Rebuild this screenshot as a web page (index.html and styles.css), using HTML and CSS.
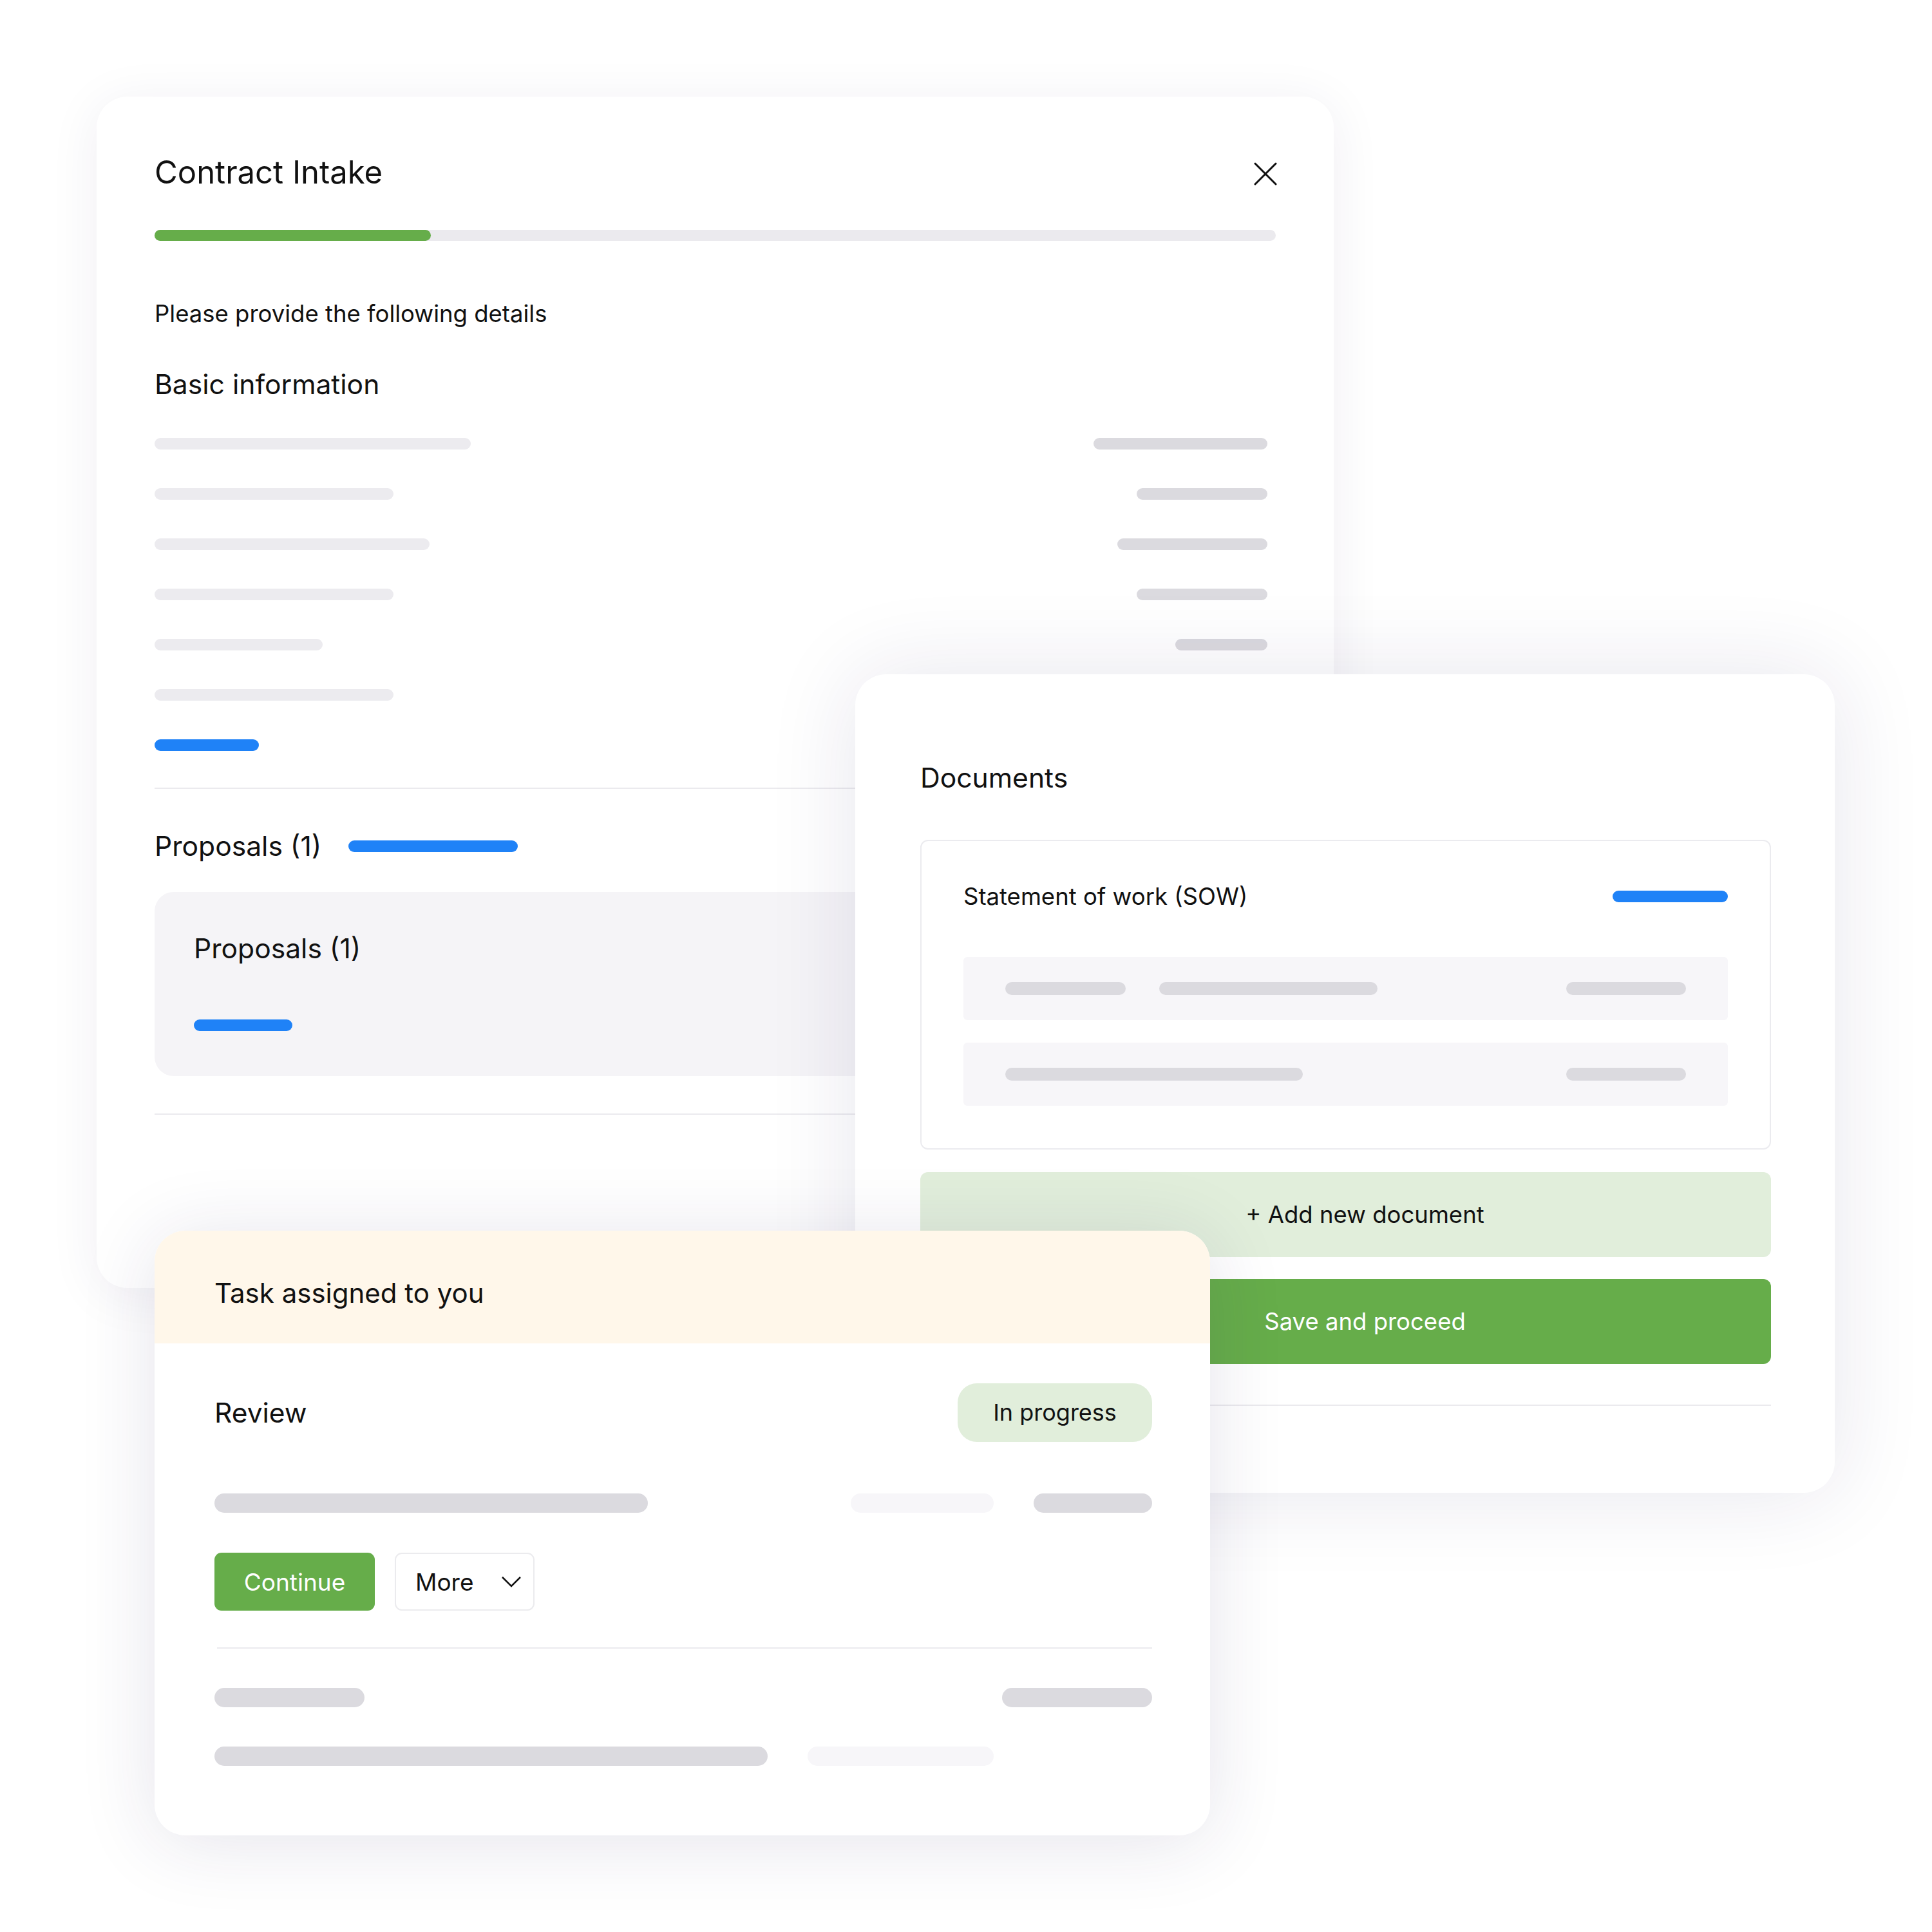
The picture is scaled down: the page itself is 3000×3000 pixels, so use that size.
FILE: index.html
```html
<!DOCTYPE html>
<html>

<head>
    <title>Contract Intake</title>
    <meta name="viewport" content="width=device-width, initial-scale=1">
    <link rel="stylesheet" href="styles.css">
</head>
<body>
    <div class="canvas">

        <!-- intake form window -->
        <div class="card intake-card">
            <div class="title-row">
                <h1 class="title">Contract Intake</h1>
                <svg class="close-icon" width="36" height="36" viewBox="0 0 36 36">
                    <path d="M2 2 L34 34 M34 2 L2 34" stroke="#111" stroke-width="3" stroke-linecap="round" fill="none"/>
                </svg>
            </div>
            <div class="progress">
                <div class="progress-fill"></div>
            </div>
            <p class="intro">Please provide the following details</p>
            <h2 class="section-title">Basic information</h2>
            <div class="info-rows">
                <div class="info-row"><span class="bar bar-light" style="width: 491px"></span><span class="bar bar-dark" style="width: 270px"></span></div>
                <div class="info-row"><span class="bar bar-light" style="width: 371px"></span><span class="bar bar-dark" style="width: 203px"></span></div>
                <div class="info-row"><span class="bar bar-light" style="width: 427px"></span><span class="bar bar-dark" style="width: 233px"></span></div>
                <div class="info-row"><span class="bar bar-light" style="width: 371px"></span><span class="bar bar-dark" style="width: 203px"></span></div>
                <div class="info-row"><span class="bar bar-light" style="width: 261px"></span><span class="bar bar-dark" style="width: 143px"></span></div>
                <div class="info-row"><span class="bar bar-light" style="width: 371px"></span><span class="bar bar-dark" style="width: 203px"></span></div>
                <div class="info-row"><span class="bar bar-blue" style="width: 162px"></span></div>
            </div>
            <hr class="divider">
            <div class="proposals-head">
                <h2 class="section-title">Proposals (1)</h2>
                <span class="bar bar-blue" style="width: 263px"></span>
            </div>
            <div class="proposal-box">
                <h2 class="section-title">Proposals (1)</h2>
                <span class="bar bar-blue" style="width: 153px"></span>
            </div>
            <hr class="divider divider-low">
        </div>

        <!-- documents window -->
        <div class="card docs-card">
            <h2 class="section-title">Documents</h2>
            <div class="doc-box">
                <div class="doc-head">
                    <span class="doc-name">Statement of work (SOW)</span>
                    <span class="bar bar-blue" style="width: 179px"></span>
                </div>
                <div class="doc-row">
                    <span class="bar bar-dark" style="width: 187px"></span>
                    <span class="bar bar-dark gap-left" style="width: 339px"></span>
                    <span class="bar bar-dark push-right" style="width: 186px"></span>
                </div>
                <div class="doc-row">
                    <span class="bar bar-dark" style="width: 462px"></span>
                    <span class="bar bar-dark push-right" style="width: 186px"></span>
                </div>
            </div>
            <button class="wide-button add-button">+ Add new document</button>
            <button class="wide-button save-button">Save and proceed</button>
            <hr class="divider docs-divider">
        </div>

        <!-- task window -->
        <div class="card task-card">
            <div class="task-head">Task assigned to you</div>
            <div class="task-body">
                <div class="review-row">
                    <span class="review-title">Review</span>
                    <span class="status-pill">In progress</span>
                </div>
                <div class="task-row first-row">
                    <span class="bar bar-dark tall" style="width: 673px"></span>
                    <span class="bar bar-faint tall push-right" style="width: 222px"></span>
                    <span class="bar bar-dark tall gap-wide" style="width: 184px"></span>
                </div>
                <div class="actions">
                    <button class="continue-button">Continue</button>
                    <button class="more-button">More
                        <svg width="32" height="18" viewBox="0 0 32 18">
                            <path d="M2 2 L16 16 L30 2" stroke="#111" stroke-width="2.5" fill="none"/>
                        </svg>
                    </button>
                </div>
                <hr class="divider task-divider">
                <div class="task-row">
                    <span class="bar bar-dark tall" style="width: 233px"></span>
                    <span class="bar bar-dark tall push-right" style="width: 233px"></span>
                </div>
                <div class="task-row last-row">
                    <span class="bar bar-dark tall" style="width: 859px"></span>
                    <span class="bar bar-faint tall gap-wide" style="width: 289px"></span>
                </div>
            </div>
        </div>

    </div>
</body>

</html>
```

FILE: styles.css
```css
body {
    margin: 0;
    padding: 0;
    background-color: #ffffff;
    font-family: Inter, "Noto Sans", sans-serif;
    color: #111111;
}

.canvas {
    position: relative;
    width: 3000px;
    height: 3000px;
    background-color: #ffffff;
}

.card {
    position: absolute;
    box-sizing: border-box;
    background-color: #ffffff;
    border-radius: 48px;
}

h1,
h2,
p {
    margin: 0;
    font-weight: 400;
}

hr.divider {
    border: none;
    height: 2px;
    margin: 0;
    background-color: #ebeaee;
}

.bar {
    display: block;
    height: 18px;
    border-radius: 9px;
    flex-shrink: 0;
}

.bar-light {
    background-color: #ecebef;
}

.bar-dark {
    background-color: #dbdadf;
}

.bar-faint {
    background-color: #f7f6f9;
}

.bar-blue {
    background-color: #1f82f7;
}

.bar.tall {
    height: 30px;
    border-radius: 15px;
}

.push-right {
    margin-left: auto;
}

/* intake form */

.intake-card {
    left: 150px;
    top: 150px;
    width: 1921px;
    height: 1850px;
    padding: 90px 90px 0;
    box-shadow: 0 10px 80px rgba(40, 30, 90, 0.07);
}

.title-row {
    display: flex;
    justify-content: space-between;
    align-items: center;
}

.title {
    font-size: 49px;
    line-height: 56px;
}

.close-icon {
    margin: 3px -2px 0 0;
}

.progress {
    margin-top: 61px;
    height: 17px;
    border-radius: 9px;
    background-color: #ebeaee;
}

.progress-fill {
    width: 429px;
    height: 100%;
    border-radius: 9px;
    background-color: #66ad4a;
}

.intro {
    margin-top: 91px;
    font-size: 36.5px;
    line-height: 44px;
}

.section-title {
    font-size: 42.6px;
    line-height: 54px;
}

.intro + .section-title {
    margin-top: 61px;
}

.info-rows {
    display: flex;
    flex-direction: column;
    gap: 60px;
    margin-top: 56px;
    padding-right: 13px;
}

.info-row {
    display: flex;
    justify-content: space-between;
}

.info-rows + .divider {
    margin-top: 57px;
}

.proposals-head {
    display: flex;
    align-items: center;
    gap: 42px;
    margin-top: 62px;
}

.proposal-box {
    margin-top: 44px;
    padding: 61px 61px 70px;
    border-radius: 30px;
    background-color: #f5f4f7;
}

.proposal-box .bar {
    margin-top: 83px;
}

.divider-low {
    margin-top: 58px !important;
}

/* documents */

.docs-card {
    left: 1328px;
    top: 1047px;
    width: 1521px;
    height: 1271px;
    padding: 134px 99px 0 101px;
    box-shadow: 0 0 140px rgba(40, 30, 90, 0.11);
}

.doc-box {
    margin-top: 69px;
    padding: 61px 65px 66px;
    border: 2px solid #ebebef;
    border-radius: 12px;
}

.doc-head {
    display: flex;
    justify-content: space-between;
    align-items: center;
}

.doc-name {
    font-size: 36.5px;
    line-height: 50px;
}

.doc-row {
    display: flex;
    align-items: center;
    height: 98px;
    margin-top: 35px;
    padding: 0 65px;
    border-radius: 6px;
    background-color: #f7f6f9;
}

.doc-head + .doc-row {
    margin-top: 69px;
}

.doc-row .bar {
    height: 20px;
    border-radius: 10px;
}

.gap-left {
    margin-left: 52px;
}

.wide-button {
    display: block;
    width: 100%;
    height: 132px;
    padding: 0 0 0 60px;
    border: none;
    border-radius: 12px;
    font-family: Inter, "Noto Sans", sans-serif;
    font-size: 36.5px;
}

.add-button {
    margin-top: 35px;
    background-color: #e1eedb;
    color: #111111;
}

.save-button {
    margin-top: 34px;
    background-color: #66ad4a;
    color: #ffffff;
}

.docs-divider {
    margin-top: 63px !important;
}

/* task */

.task-card {
    left: 240px;
    top: 1911px;
    width: 1639px;
    height: 939px;
    overflow: hidden;
    box-shadow: 0 10px 120px rgba(40, 30, 90, 0.12);
}

.task-head {
    height: 175px;
    box-sizing: border-box;
    padding: 70px 93px 0;
    background-color: #fff7ea;
    font-size: 42px;
    line-height: 54px;
}

.task-body {
    padding: 62px 90px 0 93px;
}

.review-row {
    display: flex;
    justify-content: space-between;
    align-items: center;
}

.review-title {
    font-size: 42.5px;
    line-height: 54px;
}

.status-pill {
    box-sizing: border-box;
    width: 302px;
    height: 91px;
    border-radius: 30px;
    background-color: #e1eedb;
    font-size: 36px;
    line-height: 91px;
    text-align: center;
}

.task-row {
    display: flex;
    align-items: center;
    margin-top: 61px;
}

.task-row.first-row {
    margin-top: 80px;
}

.gap-wide {
    margin-left: 62px;
}

.actions {
    display: flex;
    gap: 31px;
    margin-top: 62px;
}

.continue-button,
.more-button {
    box-sizing: border-box;
    height: 90px;
    border-radius: 11px;
    font-family: Inter, "Noto Sans", sans-serif;
    font-size: 37px;
}

.continue-button {
    width: 249px;
    border: none;
    background-color: #66ad4a;
    color: #ffffff;
}

.more-button {
    display: flex;
    align-items: center;
    gap: 42px;
    width: 217px;
    padding: 0 0 0 30px;
    border: 2px solid #ebebee;
    background-color: #ffffff;
    color: #111111;
}

.task-divider {
    margin: 57px 0 0 4px !important;
}
```
